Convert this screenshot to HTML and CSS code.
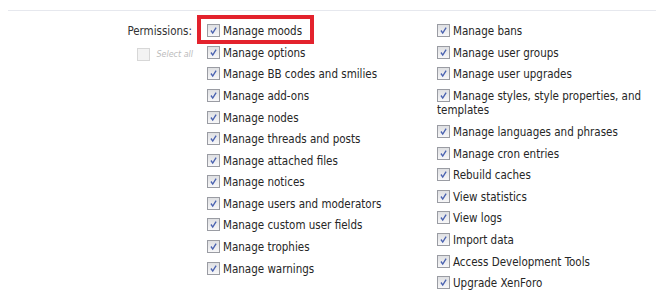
FILE: index.html
```html
<!DOCTYPE html>
<html>
<head>
<meta charset="utf-8">
<link rel="stylesheet" href="styles.css">
</head>
<body>
<div class="rule"></div>
<div class="ctrl-row">
  <div class="ctrl-label">
    <div class="label-text">Permissions:</div>
    <div class="select-all"><span class="cb cb-off"></span><span class="sa-text">Select all</span></div>
  </div>
  <div class="lists">
    <ul class="col col-left">
      <li class="opt highlighted"><span class="cb"><svg viewBox="0 0 13 13"><path d="M3.5 6.5 L5.6 9.6 L9.6 3.2"/></svg></span>Manage moods<span class="hl-box"></span></li>
      <li class="opt"><span class="cb"><svg viewBox="0 0 13 13"><path d="M3.5 6.5 L5.6 9.6 L9.6 3.2"/></svg></span>Manage options</li>
      <li class="opt"><span class="cb"><svg viewBox="0 0 13 13"><path d="M3.5 6.5 L5.6 9.6 L9.6 3.2"/></svg></span>Manage BB codes and smilies</li>
      <li class="opt"><span class="cb"><svg viewBox="0 0 13 13"><path d="M3.5 6.5 L5.6 9.6 L9.6 3.2"/></svg></span>Manage add-ons</li>
      <li class="opt"><span class="cb"><svg viewBox="0 0 13 13"><path d="M3.5 6.5 L5.6 9.6 L9.6 3.2"/></svg></span>Manage nodes</li>
      <li class="opt"><span class="cb"><svg viewBox="0 0 13 13"><path d="M3.5 6.5 L5.6 9.6 L9.6 3.2"/></svg></span>Manage threads and posts</li>
      <li class="opt"><span class="cb"><svg viewBox="0 0 13 13"><path d="M3.5 6.5 L5.6 9.6 L9.6 3.2"/></svg></span>Manage attached files</li>
      <li class="opt"><span class="cb"><svg viewBox="0 0 13 13"><path d="M3.5 6.5 L5.6 9.6 L9.6 3.2"/></svg></span>Manage notices</li>
      <li class="opt"><span class="cb"><svg viewBox="0 0 13 13"><path d="M3.5 6.5 L5.6 9.6 L9.6 3.2"/></svg></span>Manage users and moderators</li>
      <li class="opt"><span class="cb"><svg viewBox="0 0 13 13"><path d="M3.5 6.5 L5.6 9.6 L9.6 3.2"/></svg></span>Manage custom user fields</li>
      <li class="opt"><span class="cb"><svg viewBox="0 0 13 13"><path d="M3.5 6.5 L5.6 9.6 L9.6 3.2"/></svg></span>Manage trophies</li>
      <li class="opt"><span class="cb"><svg viewBox="0 0 13 13"><path d="M3.5 6.5 L5.6 9.6 L9.6 3.2"/></svg></span>Manage warnings</li>
    </ul>
    <ul class="col col-right">
      <li class="opt"><span class="cb"><svg viewBox="0 0 13 13"><path d="M3.5 6.5 L5.6 9.6 L9.6 3.2"/></svg></span>Manage bans</li>
      <li class="opt"><span class="cb"><svg viewBox="0 0 13 13"><path d="M3.5 6.5 L5.6 9.6 L9.6 3.2"/></svg></span>Manage user groups</li>
      <li class="opt"><span class="cb"><svg viewBox="0 0 13 13"><path d="M3.5 6.5 L5.6 9.6 L9.6 3.2"/></svg></span>Manage user upgrades</li>
      <li class="opt"><span class="cb"><svg viewBox="0 0 13 13"><path d="M3.5 6.5 L5.6 9.6 L9.6 3.2"/></svg></span>Manage styles, style properties, and templates</li>
      <li class="opt"><span class="cb"><svg viewBox="0 0 13 13"><path d="M3.5 6.5 L5.6 9.6 L9.6 3.2"/></svg></span>Manage languages and phrases</li>
      <li class="opt"><span class="cb"><svg viewBox="0 0 13 13"><path d="M3.5 6.5 L5.6 9.6 L9.6 3.2"/></svg></span>Manage cron entries</li>
      <li class="opt"><span class="cb"><svg viewBox="0 0 13 13"><path d="M3.5 6.5 L5.6 9.6 L9.6 3.2"/></svg></span>Rebuild caches</li>
      <li class="opt"><span class="cb"><svg viewBox="0 0 13 13"><path d="M3.5 6.5 L5.6 9.6 L9.6 3.2"/></svg></span>View statistics</li>
      <li class="opt"><span class="cb"><svg viewBox="0 0 13 13"><path d="M3.5 6.5 L5.6 9.6 L9.6 3.2"/></svg></span>View logs</li>
      <li class="opt"><span class="cb"><svg viewBox="0 0 13 13"><path d="M3.5 6.5 L5.6 9.6 L9.6 3.2"/></svg></span>Import data</li>
      <li class="opt"><span class="cb"><svg viewBox="0 0 13 13"><path d="M3.5 6.5 L5.6 9.6 L9.6 3.2"/></svg></span>Access Development Tools</li>
      <li class="opt"><span class="cb"><svg viewBox="0 0 13 13"><path d="M3.5 6.5 L5.6 9.6 L9.6 3.2"/></svg></span>Upgrade XenForo</li>
    </ul>
  </div>
</div>
</body>
</html>
```
FILE: styles.css
```css
html, body {
  margin: 0;
  padding: 0;
  background: #ffffff;
}
body {
  font-family: "DejaVu Sans Condensed", "DejaVu Sans", sans-serif;
  font-size: 11.5px;
  line-height: 14.4px;
  color: #262626;
}
.rule {
  margin: 10px 12px 0 8px;
  border-top: 1px solid #e6e8ee;
}
.ctrl-row {
  display: flex;
  padding-top: 9.6px;
}
.ctrl-label {
  width: 193px;
  flex: none;
  display: flex;
  flex-direction: column;
  align-items: flex-end;
  padding-top: 3.6px;
}
.label-text {
  color: #333333;
  padding-right: 1px;
}
.select-all {
  display: flex;
  align-items: center;
  margin-top: 9px;
  opacity: 0.5;
}
.sa-text {
  font-family: "DejaVu Sans", sans-serif;
  font-style: italic;
  font-size: 8px;
  color: #777;
  margin-left: 3px;
}
.lists {
  display: flex;
  margin-left: 14px;
}
.col {
  list-style: none;
  margin: 0;
  padding: 0;
}
.col-left {
  width: 230px;
}
.col-right {
  width: 218px;
}
.opt {
  padding: 3.6px 0;
  height: 14.4px;
  position: relative;
}
.col-right .opt {
  height: auto;
}
.cb {
  display: inline-block;
  width: 11px;
  height: 11px;
  border: 1px solid #9a9ca3;
  background: linear-gradient(#dfe0e3, #f7f7f8);
  vertical-align: -2px;
  margin-right: 3px;
  box-sizing: content-box;
}
.cb svg {
  display: block;
  width: 11px;
  height: 11px;
}
.cb path {
  fill: none;
  stroke: #4a62b0;
  stroke-width: 1.6;
}
.cb-off {
  background: #e8e8e8;
  border-color: #b0b0b0;
}
.hl-box {
  position: absolute;
  left: -10px;
  top: -5.2px;
  width: 117px;
  height: 29px;
  border: 4px solid #e3222d;
  box-sizing: border-box;
}
```
